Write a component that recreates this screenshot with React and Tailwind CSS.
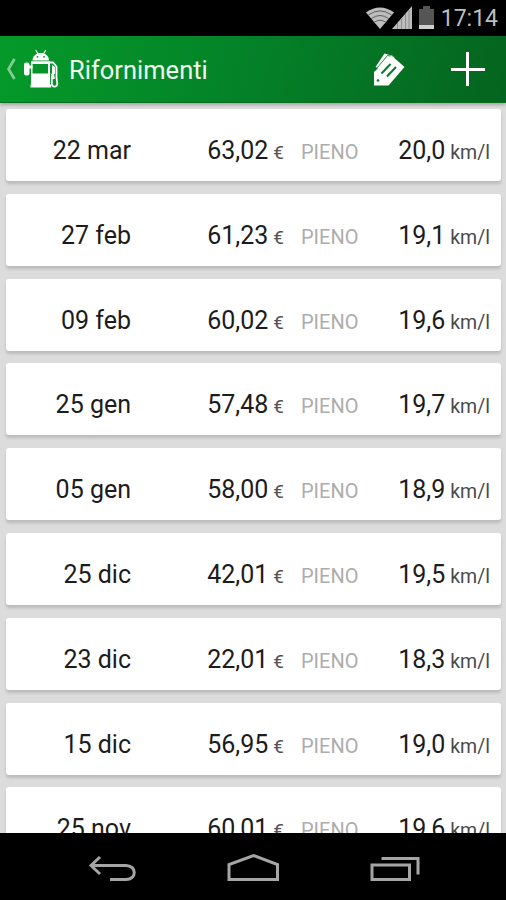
const refuels = [
    { date: '22 mar', amount: '63,02', mileage: '20,0' },
    { date: '27 feb', amount: '61,23', mileage: '19,1' },
    { date: '09 feb', amount: '60,02', mileage: '19,6' },
    { date: '25 gen', amount: '57,48', mileage: '19,7' },
    { date: '05 gen', amount: '58,00', mileage: '18,9' },
    { date: '25 dic', amount: '42,01', mileage: '19,5' },
    { date: '23 dic', amount: '22,01', mileage: '18,3' },
    { date: '15 dic', amount: '56,95', mileage: '19,0' },
    { date: '25 nov', amount: '60,01', mileage: '19,6' },
];

function StatusBar() {
    return (
        <div className="h-9 shrink-0 bg-black flex items-center justify-end pr-[8px]">
            <svg width="70" height="24" viewBox="0 0 70 24" className="mr-[5px]">
                {/* Wifi */}
                <path d="M0 6.5Q14 -3.5 28 6.5L14 23Z" fill="#bcbcbc" />
                <path d="M2.5 8.800Q14 1 25.5 8.800M5.5 12.500Q14 6.5 22.5 12.500M8.5 16Q14 12.5 19.5 16" fill="none" stroke="#555" strokeWidth="0.9" />
                {/* Signal */}
                <path d="M26 23L46 0V23Z" fill="#bcbcbc" />
                <path d="M31.5 17v6M35.5 13v10M39.5 8v15M43 4v19" stroke="#888" strokeWidth="0.9" />
                {/* Battery */}
                <path d="M57 0h7v3h4v20H53V3h4Z" fill="#555" />
                <path d="M53 19h15v4H53Z" fill="#cfcfcf" />
            </svg>
            <span className="text-[23px] leading-none text-[#bebebe] pt-[1px]">17:14</span>
        </div>
    );
}

function PumpIcon() {
    return (
        <svg width="36" height="40" viewBox="0 0 36 40" fill="none">
            <path d="M12 1.500l2 3.500M21.500 1.500l-2 3.500" stroke="#fff" strokeWidth="1.2" strokeLinecap="round" />
            <path d="M8.500 11.500C8.500 1.500 25 1.500 25 11.500Z" fill="#fff" />
            <circle cx="13.500" cy="7.800" r="0.900" fill="#048a25" />
            <circle cx="20" cy="7.800" r="0.900" fill="#048a25" />
            <path fillRule="evenodd" d="M7 12.300H26V35.500H27V38.500H6.500V35.500H7ZM8.500 15V24.500H24V15Z" fill="#fff" />
            <rect x="0" y="13.500" width="5.500" height="13" rx="2.200" fill="#fff" />
            <path d="M4.500 18h4" stroke="#fff" strokeWidth="3" />
            <path d="M26 13.500h3l3.500 4v11l0.800 6c0 4.500-5.500 4-5.500 0V27" stroke="#fff" strokeWidth="1.800" />
            <path d="M28 16l3 2v7h-3z" fill="#fff" />
            <path d="M28.300 24.500l1.200 5.500" stroke="#fff" strokeWidth="3" />
        </svg>
    );
}

function ActionBar() {
    return (
        <div className="relative z-10 h-[67px] shrink-0 bg-linear-[105deg] from-[#049a2a] via-[#048128] to-[#04641f] border-b border-[#087020] shadow-[0_2px_3px_rgba(0,0,0,0.25)] flex items-center">
            <svg width="12" height="24" viewBox="0 0 12 24" className="ml-[6px] mr-[6px]">
                <path d="M8.500 2L2.500 12L8.500 22" fill="none" stroke="#85cd93" strokeWidth="2.700" />
            </svg>
            <PumpIcon />
            <h1 className="ml-[9px] pt-[4px] text-[25.500px] leading-none font-normal text-[#eef9ef]">Rifornimenti</h1>
            <div className="ml-auto mr-[21px] flex items-center gap-[45px]">
                <svg width="34" height="36" viewBox="0 0 34 36" fill="none">
                    <path d="M3.500 16L12.500 2.500L23 5.500L9 19Z" fill="#fff" />
                    <path d="M5 17L15.500 4.500L24 6" stroke="#047d25" strokeWidth="0.9" />
                    <path d="M2 21L19.500 4.500L32.500 16L16.500 34.500H2Z" fill="#fff" />
                    <path d="M9.500 22.500L18.500 13M15 25.500L24 16" stroke="#047d25" strokeWidth="2" />
                    <circle cx="6" cy="29.500" r="1.300" fill="#047d25" />
                </svg>
                <svg width="34" height="34" viewBox="0 0 34 34">
                    <path d="M16.500 0V34M0 17.500H34" stroke="#fff" strokeWidth="3" />
                </svg>
            </div>
        </div>
    );
}

function RefuelCard({ date, amount, mileage }) {
    return (
        <div className="h-[72px] shrink-0 rounded-[3px] bg-white shadow-[0_3px_3px_rgba(0,0,0,0.15)] flex items-baseline pt-[27px] leading-[30px] text-[25px] text-[#1c1c1c]">
            <div className="w-[125px] text-right">{date}</div>
            <div className="w-[153px] text-right whitespace-nowrap">
                {amount}<span className="text-[19px] text-[#555] ml-[5px]">€</span>
            </div>
            <div className="ml-[17px] w-[60px] text-[20px] text-[#adadad]">PIENO</div>
            <div className="ml-auto mr-[11px] whitespace-nowrap">
                {mileage}<span className="text-[19.500px] text-[#4a4a4a] ml-[5px]">km/l</span>
            </div>
        </div>
    );
}

function NavigationBar() {
    return (
        <div className="h-[67px] shrink-0 bg-black flex items-center justify-center gap-[88px] pt-[3px] pl-[2px]">
            <svg width="52" height="30" viewBox="0 0 52 30" fill="none" stroke="#a5a5a5" strokeWidth="3">
                <path d="M13 4L4 12.500L13 21M4.500 12.500H39C50 12.500 50 26.500 39 26.500H23" />
            </svg>
            <svg width="54" height="30" viewBox="0 0 54 30" fill="none" stroke="#a5a5a5" strokeWidth="3">
                <path d="M2 26.500V11.500L26.500 2.500L50.500 11.500V26.500Z" />
            </svg>
            <svg width="52" height="30" viewBox="0 0 52 30" fill="none" stroke="#a5a5a5" strokeWidth="3">
                <path d="M3 12H40.500V26.500H3ZM12.500 5.500H49V21.500" />
            </svg>
        </div>
    );
}

export default function App() {
    return (
        <div className="w-[506px] h-[900px] flex flex-col overflow-hidden font-[Roboto,sans-serif]">
            <StatusBar />
            <ActionBar />
            <main className="flex-1 min-h-0 overflow-hidden bg-[#dcdcdc] pl-[6px] pr-[5px] pt-[6px] flex flex-col gap-[12.800px]">
                {refuels.map((r) => <RefuelCard key={r.date} {...r} />)}
            </main>
            <NavigationBar />
        </div>
    );
}
